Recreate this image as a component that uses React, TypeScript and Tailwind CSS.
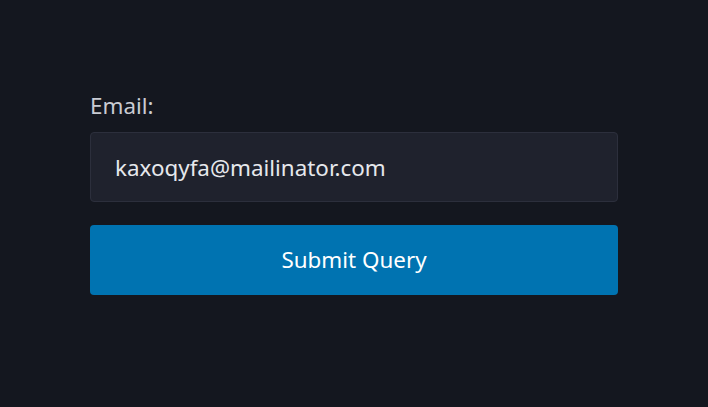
import React from 'react'

const App: React.FC = () => {
  return (
    <div
      className="min-h-[407px] w-full bg-[#14171f] px-[90px] pt-[90px]"
      style={{ fontFamily: '"Noto Sans", "Open Sans", sans-serif' }}
    >
      <form className="flex w-[528px] flex-col" onSubmit={(e) => e.preventDefault()}>
        <label htmlFor="email" className="text-[22.4px] leading-[32px] text-[#c9ccd3]">
          Email:
        </label>
        <input
          id="email"
          type="email"
          defaultValue="kaxoqyfa@mailinator.com"
          className="mt-[10px] h-[70px] w-full rounded-[4px] border border-[#2c2f3c] bg-[#1f222d] px-[24px] text-[22.4px] text-[#e6e8ec] outline-none"
        />
        <button
          type="submit"
          className="mt-[23px] h-[70px] w-full rounded-[4px] bg-[#0073b1] text-[22.4px] text-white"
        >
          Submit Query
        </button>
      </form>
    </div>
  )
}

export default App
